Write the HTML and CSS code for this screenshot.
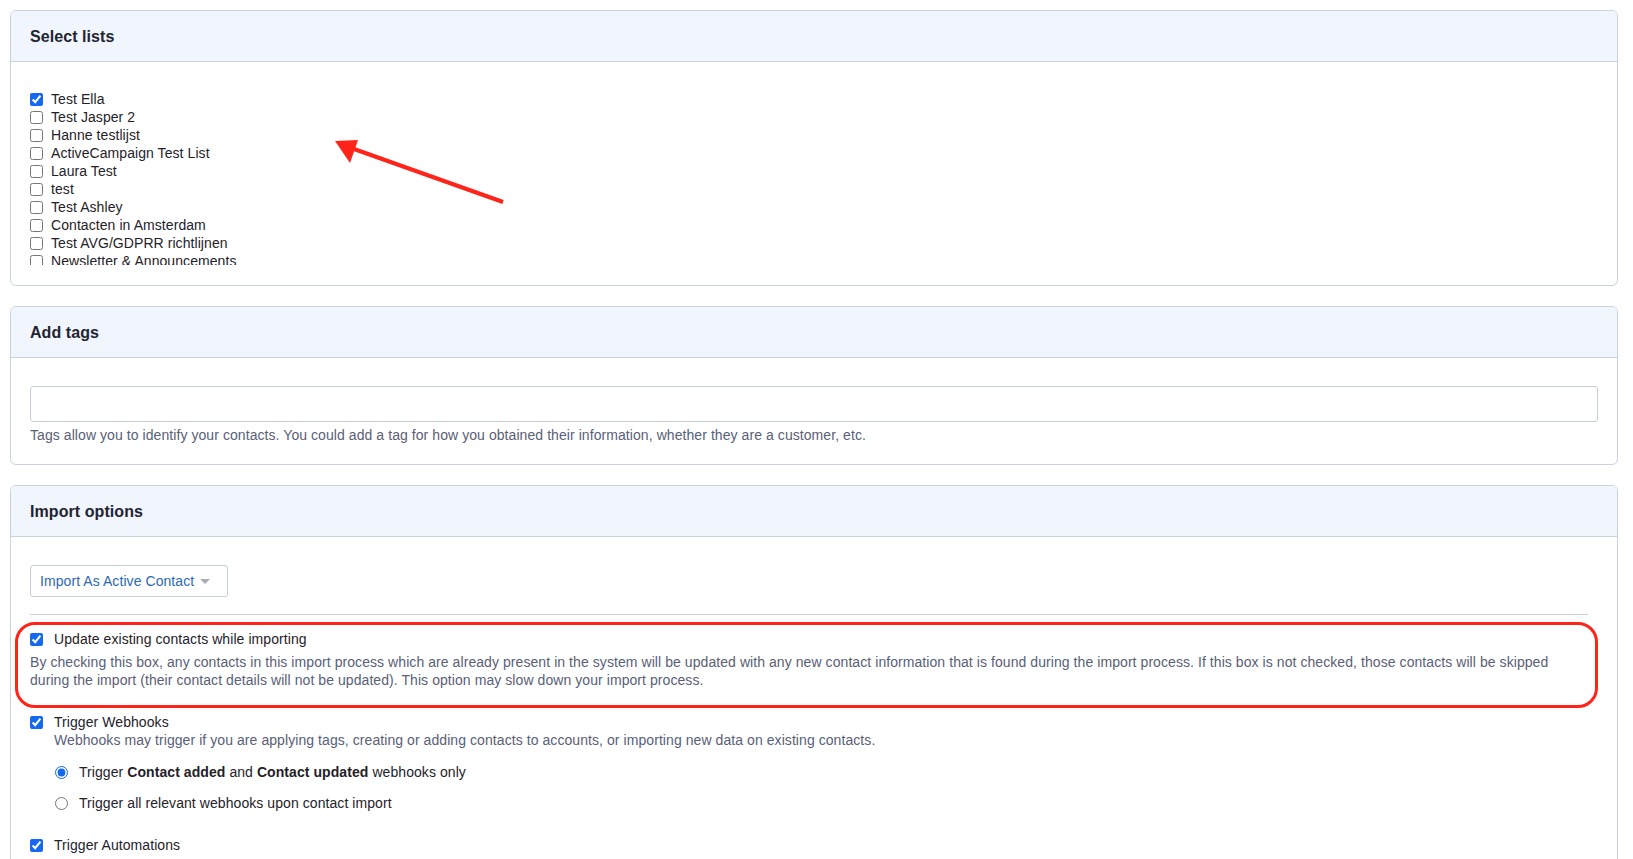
FILE: index.html
```html
<!DOCTYPE html>
<html lang="en">
<head>
    <meta charset="UTF-8">
    <meta name="viewport" content="width=device-width, initial-scale=1.0">
    <title>Import contacts</title>
    <link rel="stylesheet" href="styles.css">
</head>
<body>
  <div class="page">
    <div class="card">
      <div class="card-header">Select lists</div>
      <div class="card-body">
        <div class="lists">
          <label class="list-item"><input type="checkbox" checked> Test Ella</label>
          <label class="list-item"><input type="checkbox"> Test Jasper 2</label>
          <label class="list-item"><input type="checkbox"> Hanne testlijst</label>
          <label class="list-item"><input type="checkbox"> ActiveCampaign Test List</label>
          <label class="list-item"><input type="checkbox"> Laura Test</label>
          <label class="list-item"><input type="checkbox"> test</label>
          <label class="list-item"><input type="checkbox"> Test Ashley</label>
          <label class="list-item"><input type="checkbox"> Contacten in Amsterdam</label>
          <label class="list-item"><input type="checkbox"> Test AVG/GDPRR richtlijnen</label>
          <label class="list-item"><input type="checkbox"> Newsletter &amp; Announcements</label>
        </div>
      </div>
    </div>

    <div class="card">
      <div class="card-header">Add tags</div>
      <div class="card-body">
        <input type="text" class="tag-input">
        <div class="help">Tags allow you to identify your contacts. You could add a tag for how you obtained their information, whether they are a customer, etc.</div>
      </div>
    </div>

    <div class="card">
      <div class="card-header">Import options</div>
      <div class="card-body">
        <button class="dropdown">Import As Active Contact <span class="caret"></span></button>
        <hr class="divider">
        <div class="option">
          <label class="option-label"><input type="checkbox" checked> Update existing contacts while importing</label>
          <div class="help">By checking this box, any contacts in this import process which are already present in the system will be updated with any new contact information that is found during the import process. If this box is not checked, those contacts will be skipped during the import (their contact details will not be updated). This option may slow down your import process.</div>
        </div>
        <div class="option">
          <label class="option-label"><input type="checkbox" checked> Trigger Webhooks</label>
          <div class="help indent">Webhooks may trigger if you are applying tags, creating or adding contacts to accounts, or importing new data on existing contacts.</div>
          <div class="radios">
            <label class="radio"><input type="radio" name="hooks" checked> <span>Trigger <b>Contact added</b> and <b>Contact updated</b> webhooks only</span></label>
            <label class="radio"><input type="radio" name="hooks"> <span>Trigger all relevant webhooks upon contact import</span></label>
          </div>
        </div>
        <div class="option">
          <label class="option-label"><input type="checkbox" checked> Trigger Automations</label>
        </div>
      </div>
    </div>

    <div class="highlight"></div>
    <svg class="arrow" width="180" height="70" viewBox="0 0 180 70">
      <line x1="173" y1="62" x2="24" y2="9" stroke="#ff2419" stroke-width="4"/>
      <polygon points="5,1 28,0 20,23" fill="#ff2419"/>
    </svg>
  </div>
</body>
</html>
```

FILE: styles.css
```css
body {
    margin: 0;
    font-family: "Liberation Sans", Arial, sans-serif;
    font-size: 14px;
    line-height: 18px;
    letter-spacing: 0.07px;
    color: #1f2229;
    background-color: #fff;
}
.page {
    position: relative;
    padding: 10px 15px 0 10px;
}
.card {
    border: 1px solid #cbd1df;
    border-radius: 6px;
    margin-bottom: 20px;
    overflow: hidden;
}
.card-header {
    background-color: #f0f5fe;
    border-bottom: 1px solid #cbd1df;
    height: 50px;
    line-height: 51px;
    padding: 0 19px;
    font-size: 16px;
    font-weight: bold;
    color: #1f2430;
}
.card-body {
    padding: 28px 19px 20px 19px;
}
.lists {
    height: 175px;
    overflow: hidden;
}
.list-item {
    display: flex;
    align-items: center;
    gap: 8px;
    height: 18px;
}
input[type="checkbox"], input[type="radio"] {
    margin: 0;
    width: 13px;
    height: 13px;
    accent-color: #1469f0;
}
.tag-input {
    display: block;
    box-sizing: border-box;
    width: 100%;
    height: 36px;
    border: 1px solid #c6ccd8;
    border-radius: 3px;
    margin: 0;
}
.help {
    color: #596077;
    margin-top: 4px;
}
.dropdown {
    display: flex;
    align-items: center;
    height: 32px;
    padding: 0 17px 0 9px;
    border: 1px solid #c6ccd8;
    border-radius: 3px;
    background: #fff;
    font-family: inherit;
    font-size: 14px;
    letter-spacing: 0.07px;
    color: #2c6ab3;
    gap: 6px;
}
.caret {
    width: 0;
    height: 0;
    border-left: 5px solid transparent;
    border-right: 5px solid transparent;
    border-top: 5px solid #a8adb8;
}
.divider {
    border: none;
    border-top: 1px solid #cdd1da;
    margin: 17px 10px 15px 0;
}
.option {
    margin: 0 10px 24px 0;
}
.option-label {
    display: flex;
    align-items: center;
    gap: 11px;
    height: 18px;
}
.option .help {
    margin-top: 5px;
}
.help.indent {
    margin-top: 0;
    padding-left: 24px;
}
.radios {
    padding-left: 25px;
    margin-top: 14px;
}
.radio {
    display: flex;
    align-items: center;
    gap: 11px;
    height: 18px;
    margin-bottom: 13px;
}
.highlight {
    position: absolute;
    left: 15px;
    top: 622px;
    width: 1577px;
    height: 80px;
    border: 3px solid #ff2419;
    border-radius: 20px;
}
.arrow {
    position: absolute;
    left: 330px;
    top: 140px;
}
```
